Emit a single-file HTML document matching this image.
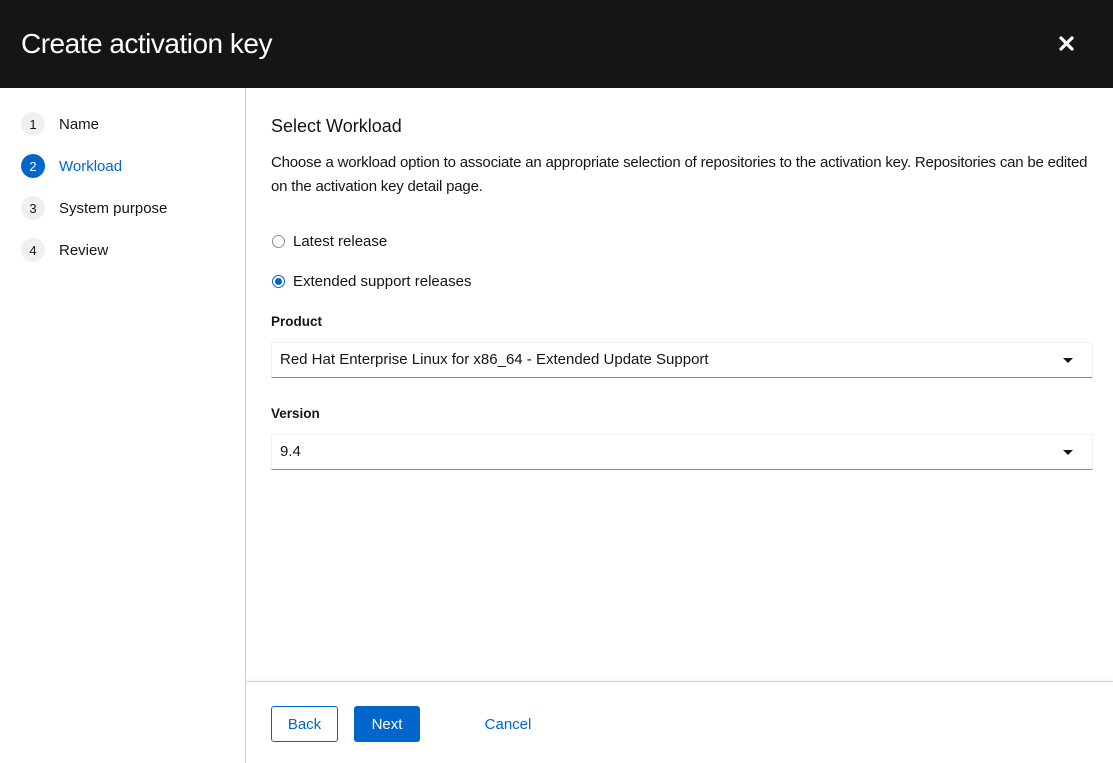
<!DOCTYPE html>
<html><head><style>
*{box-sizing:border-box;margin:0;padding:0}
body{width:1113px;height:763px;overflow:hidden;background:#fff;font-family:"Liberation Sans",sans-serif;color:#151515;position:relative}
.hdr{position:absolute;left:0;top:0;width:1113px;height:88px;background:#151515}
.hdr h1{position:absolute;left:21px;top:28px;font-size:28px;font-weight:400;color:#fff;letter-spacing:-0.5px}
.x{position:absolute;left:1058px;top:35px}
.side{position:absolute;left:0;top:88px;width:246px;height:675px;border-right:1px solid #d2d2d2}
.step{position:absolute;left:21px;font-size:15px;display:flex;align-items:center}
.num{width:24px;height:24px;border-radius:50%;background:#f0f0f0;color:#151515;font-size:13px;display:flex;align-items:center;justify-content:center;margin-right:14px}
.act .num{background:#0066cc;color:#fff}
.act{color:#0066cc}
.main{position:absolute;left:271px}
h2{position:absolute;left:271px;top:116px;font-size:18px;font-weight:400}
.desc{position:absolute;left:271px;top:151px;width:820px;font-size:15px;line-height:24px;letter-spacing:-0.2px}
.radio{position:absolute;left:272px;font-size:15px;display:flex;align-items:center}
.rc{width:13px;height:13px;border-radius:50%;border:1px solid #8a8d90;margin-right:8px;position:relative}
.rc.on{border-color:#0066cc}
.rc.on::after{content:"";position:absolute;left:2px;top:2px;width:7px;height:7px;border-radius:50%;background:#0066cc}
.lbl{position:absolute;left:271px;font-size:13.5px;font-weight:700}
.sel{position:absolute;left:271px;width:822px;height:36px;border:1px solid #f0f0f0;border-bottom:1px solid #8a8d90;font-size:15px;padding:8px 0 0 8px}
.sel::after{content:"";position:absolute;right:19px;top:15px;border-left:5px solid transparent;border-right:5px solid transparent;border-top:5px solid #151515}
.foot{position:absolute;left:247px;top:681px;width:866px;height:82px;border-top:1px solid #d2d2d2;box-shadow:0 -1px 3px rgba(0,0,0,.06)}
.btn{position:absolute;top:706px;height:36px;font-size:15px;border-radius:3px;display:flex;align-items:center;justify-content:center}
</style></head><body>
<div class="hdr"><h1>Create activation key</h1>
<svg class="x" width="17" height="17" viewBox="0 0 17 17"><path d="M3 3L14 14M14 3L3 14" stroke="#fff" stroke-width="3.2" stroke-linecap="round"/></svg></div>
<div class="side">
<div class="step" style="top:24px"><span class="num">1</span>Name</div>
<div class="step act" style="top:66px"><span class="num">2</span>Workload</div>
<div class="step" style="top:108px"><span class="num">3</span>System purpose</div>
<div class="step" style="top:150px"><span class="num">4</span>Review</div>
</div>
<h2>Select Workload</h2>
<div class="desc">Choose a workload option to associate an appropriate selection of repositories to the activation key. Repositories can be edited on the activation key detail page.</div>
<div class="radio" style="top:233px"><span class="rc"></span>Latest release</div>
<div class="radio" style="top:273px"><span class="rc on"></span>Extended support releases</div>
<div class="lbl" style="top:314px">Product</div>
<div class="sel" style="top:342px">Red Hat Enterprise Linux for x86_64 - Extended Update Support</div>
<div class="lbl" style="top:406px">Version</div>
<div class="sel" style="top:434px">9.4</div>
<div class="foot"></div>
<div class="btn" style="left:271px;width:67px;border:1px solid #0066cc;color:#0066cc">Back</div>
<div class="btn" style="left:354px;width:66px;background:#0066cc;color:#fff">Next</div>
<div class="btn" style="left:470px;width:76px;color:#0066cc">Cancel</div>
</body></html>
